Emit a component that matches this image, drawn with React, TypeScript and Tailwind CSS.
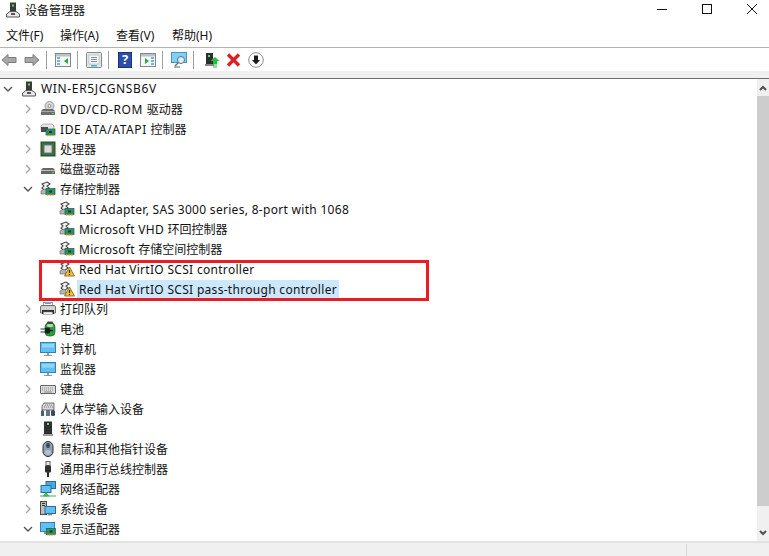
import { ReactNode } from 'react';

const Svg = ({ children, size = 16, className = '' }: { children: ReactNode; size?: number; className?: string }) => (
  <svg width={size} height={size} viewBox="0 0 16 16" className={`shrink-0 ${className}`}>
    {children}
  </svg>
);

// Tree icons
const ComputerRoot = () => (
  <Svg>
    <rect x="5" y="0.5" width="6" height="9" fill="#3c3c3c" />
    <rect x="7" y="2.5" width="2" height="2" fill="#5fd35f" />
    <path d="M5 9.5 H11 L14.5 12 V15 H1.5 V12 Z" fill="#e8e8e8" stroke="#555" />
    <rect x="6" y="11" width="4" height="2" fill="#555" />
  </Svg>
);

const Disc = () => (
  <Svg>
    <ellipse cx="9.5" cy="5" rx="4.5" ry="4.5" fill="#d8d8d8" stroke="#9a9a9a" />
    <circle cx="9.5" cy="5" r="1.5" fill="#fff" stroke="#888" />
    <path d="M1 10 L3 8 H13 L15 10 V14 H1 Z" fill="#6d6d6d" />
    <rect x="1" y="10" width="14" height="1" fill="#a8a8a8" />
    <rect x="12" y="12" width="2" height="1" fill="#62d862" />
  </Svg>
);

const Board = ({ x = 6, y = 8 }: { x?: number; y?: number }) => (
  <g>
    <rect x={x} y={y} width="9" height="6" fill="#2f8f6a" stroke="#1d5e47" strokeWidth="0.7" />
    <rect x={x + 3} y={y + 2} width="3" height="2" fill="#163a2c" />
    <path d={`M${x + 1} ${y + 6.5} H${x + 8}`} stroke="#e8a020" strokeWidth="1.6" strokeDasharray="1 0.6" />
  </g>
);

const Ide = () => (
  <Svg>
    <path d="M1 5 L3 3 H12 L14 5 V9 H1 Z" fill="#e6e6e6" stroke="#8c8c8c" strokeWidth="0.6" />
    <rect x="1" y="6" width="7" height="5" fill="#4c4c4c" />
    <Board />
  </Svg>
);

const Cpu = () => (
  <Svg>
    <rect x="1" y="1" width="14" height="14" fill="#3a6b45" stroke="#274c31" />
    <rect x="4" y="4" width="8" height="8" fill="#ddd" stroke="#6a7d6e" />
    <path d="M1 3 H0 M1 6 H0 M1 9 H0 M1 12 H0 M15 3 H16 M15 6 H16 M15 9 H16 M15 12 H16" stroke="#c8a030" strokeWidth="1" />
  </Svg>
);

const Drive = () => (
  <Svg>
    <path d="M1 9 L3 7 H13 L15 9 V13 H1 Z" fill="#666" />
    <rect x="1" y="9" width="14" height="1" fill="#bdbdbd" />
    <rect x="12" y="11" width="2" height="1" fill="#62d862" />
  </Svg>
);

const GearBase = () => (
  <g>
    <path d="M7 1 L10 3 L7 5 L9 7 L5 10 L2 7 L4 5 L2 3 Z" fill="#f4f4f4" stroke="#4a4a4a" strokeWidth="1.1" />
    <path d="M1 10 L5 8 L7 10 V13 H1 Z" fill="#b5b5b5" stroke="#666" strokeWidth="0.6" />
  </g>
);

const Storage = () => (
  <Svg>
    <GearBase />
    <Board y={7.5} />
  </Svg>
);

const StorageWarn = () => (
  <Svg>
    <GearBase />
    <path d="M10.5 6 L15.5 15 H5.5 Z" fill="#f5c33b" stroke="#7a5a10" strokeWidth="0.8" strokeLinejoin="round" />
    <path d="M10.5 9 V12 M10.5 13 V14" stroke="#222" strokeWidth="1.2" />
  </Svg>
);

const Printer = () => (
  <Svg>
    <rect x="3.5" y="1.5" width="9" height="3" fill="#fff" stroke="#777" strokeWidth="0.7" />
    <rect x="5" y="2" width="6" height="1" fill="#3cb0e0" />
    <path d="M0.5 6 Q0.5 4.5 2 4.5 H14 Q15.5 4.5 15.5 6 V12 H0.5 Z" fill="#d2d2d2" stroke="#555" strokeWidth="0.8" />
    <rect x="2" y="9" width="12" height="4" fill="#2f2f2f" />
    <rect x="3.5" y="11" width="9" height="2.5" fill="#f5f5f5" stroke="#777" strokeWidth="0.5" />
  </Svg>
);

const Battery = () => (
  <Svg>
    <rect x="5" y="2" width="10" height="13" rx="4" fill="#27a040" stroke="#14602a" strokeWidth="0.7" />
    <rect x="7" y="0.5" width="6" height="3" rx="1" fill="#444" />
    <rect x="7" y="3" width="6" height="3" rx="1" fill="#a8dca8" />
    <path d="M0.5 8 H6 M0.5 11 H6" stroke="#333" strokeWidth="1.2" />
    <rect x="5" y="6.5" width="5" height="6" rx="1.5" fill="#1d1d1d" />
    <path d="M10 9.5 H13" stroke="#1d1d1d" strokeWidth="1.5" />
  </Svg>
);

const Monitor = () => (
  <Svg>
    <rect x="0.5" y="1.5" width="15" height="10" fill="#5fc0f3" stroke="#3d7fa8" />
    <rect x="2" y="3" width="12" height="3.5" fill="#8ed7fb" />
    <rect x="7" y="12" width="2" height="2" fill="#8a9aa5" />
    <rect x="4" y="14" width="8" height="1" fill="#8a9aa5" />
  </Svg>
);

const Keyboard = () => (
  <Svg>
    <rect x="0.5" y="4.5" width="15" height="8" rx="0.5" fill="#dcdcdc" stroke="#666" />
    <path d="M2 7 H14 M2 9 H14" stroke="#8a8a8a" strokeWidth="1" strokeDasharray="1 1" />
    <path d="M4 11 H12" stroke="#8a8a8a" strokeWidth="1" />
  </Svg>
);

const Hid = () => (
  <Svg>
    <path d="M2 5 L4 2 H14 V9 H2 Z" fill="#d8d8d8" stroke="#555" strokeWidth="0.8" />
    <path d="M5 4 H13 M4 6 H13" stroke="#777" strokeWidth="1" strokeDasharray="1 1" />
    <path d="M1 15 V10 Q2 8 4 10 V15 Z" fill="#4b5c77" />
    <rect x="6" y="9" width="4" height="6" fill="#5d7390" />
    <rect x="11" y="9" width="4" height="6" rx="1.5" fill="#39475c" />
  </Svg>
);

const Software = () => (
  <Svg>
    <rect x="4" y="0.5" width="8" height="14" fill="#2f2f2f" />
    <rect x="7" y="2" width="2" height="2" fill="#55e06a" />
    <rect x="3" y="13" width="10" height="2" fill="#a0a0a0" />
  </Svg>
);

const Mouse = () => (
  <Svg>
    <rect x="3" y="0.5" width="10" height="15" rx="5" fill="#8fa0b0" stroke="#26313c" />
    <rect x="6" y="2" width="4" height="5" rx="2" fill="#3c4a58" />
    <rect x="5" y="9" width="6" height="5" rx="2.5" fill="#b4c0cb" />
  </Svg>
);

const Usb = () => (
  <Svg>
    <rect x="6" y="0.5" width="4" height="4" fill="#e8e8e8" stroke="#666" />
    <rect x="5" y="4.5" width="6" height="7" rx="1" fill="#2f2f2f" />
    <path d="M8 11 V16" stroke="#2f2f2f" strokeWidth="2" />
  </Svg>
);

const Network = () => (
  <Svg>
    <rect x="6" y="0.5" width="9.5" height="7" fill="#4aa8e0" stroke="#2d6c95" />
    <rect x="1" y="4.5" width="10" height="7" fill="#5fc0f3" stroke="#2d6c95" />
    <path d="M6 11.5 V13" stroke="#555" />
    <path d="M3 15 L6 12.5 L9 15 Z M0 15 H16" fill="#3fb54a" stroke="#3fb54a" strokeWidth="1" />
  </Svg>
);

const SystemDev = () => (
  <Svg>
    <rect x="0.5" y="0.5" width="6" height="13" fill="#bdbdbd" stroke="#4a4a4a" />
    <rect x="2" y="2" width="3" height="1" fill="#333" />
    <rect x="2" y="4" width="3" height="1" fill="#333" />
    <rect x="5" y="5.5" width="10.5" height="7" fill="#5fc0f3" stroke="#2d6c95" />
    <rect x="8" y="13" width="4" height="1.5" fill="#8a9aa5" />
  </Svg>
);

const Display = () => (
  <Svg>
    <rect x="0.5" y="1.5" width="14" height="9" fill="#5fc0f3" stroke="#3d7fa8" />
    <rect x="4" y="11" width="6" height="2" fill="#8a9aa5" />
    <Board x={6.5} y={7.5} />
  </Svg>
);

const icons = {
  disc: <Disc />,
  ide: <Ide />,
  cpu: <Cpu />,
  drive: <Drive />,
  storage: <Storage />,
  warn: <StorageWarn />,
  printer: <Printer />,
  battery: <Battery />,
  computer: <Monitor />,
  monitor: <Monitor />,
  keyboard: <Keyboard />,
  hid: <Hid />,
  software: <Software />,
  mouse: <Mouse />,
  usb: <Usb />,
  network: <Network />,
  system: <SystemDev />,
  display: <Display />,
};

type Row = { label: string; icon: keyof typeof icons; level: 1 | 2; open?: boolean; selected?: boolean; caps?: boolean };

const rows: Row[] = [
  { label: 'DVD/CD-ROM 驱动器', icon: 'disc', level: 1, caps: true },
  { label: 'IDE ATA/ATAPI 控制器', icon: 'ide', level: 1, caps: true },
  { label: '处理器', icon: 'cpu', level: 1 },
  { label: '磁盘驱动器', icon: 'drive', level: 1 },
  { label: '存储控制器', icon: 'storage', level: 1, open: true },
  { label: 'LSI Adapter, SAS 3000 series, 8-port with 1068', icon: 'storage', level: 2 },
  { label: 'Microsoft VHD 环回控制器', icon: 'storage', level: 2 },
  { label: 'Microsoft 存储空间控制器', icon: 'storage', level: 2 },
  { label: 'Red Hat VirtIO SCSI controller', icon: 'warn', level: 2 },
  { label: 'Red Hat VirtIO SCSI pass-through controller', icon: 'warn', level: 2, selected: true },
  { label: '打印队列', icon: 'printer', level: 1 },
  { label: '电池', icon: 'battery', level: 1 },
  { label: '计算机', icon: 'computer', level: 1 },
  { label: '监视器', icon: 'monitor', level: 1 },
  { label: '键盘', icon: 'keyboard', level: 1 },
  { label: '人体学输入设备', icon: 'hid', level: 1 },
  { label: '软件设备', icon: 'software', level: 1 },
  { label: '鼠标和其他指针设备', icon: 'mouse', level: 1 },
  { label: '通用串行总线控制器', icon: 'usb', level: 1 },
  { label: '网络适配器', icon: 'network', level: 1 },
  { label: '系统设备', icon: 'system', level: 1 },
  { label: '显示适配器', icon: 'display', level: 1, open: true },
];

const Chevron = ({ open }: { open?: boolean }) => (
  <svg width="10" height="10" viewBox="0 0 10 10" className="shrink-0">
    {open ? (
      <path d="M1 3 L5 7 L9 3" fill="none" stroke="#555" strokeWidth="1.4" />
    ) : (
      <path d="M3 1 L7 5 L3 9" fill="none" stroke="#a6a6a6" strokeWidth="1.4" />
    )}
  </svg>
);

// latin runs get a little tracking, CJK runs none
const Label = ({ text, caps }: { text: string; caps?: boolean }) => (
  <>
    {text.split(/([\u4e00-\u9fff]+)/).map((part, i) =>
      i % 2 === 1 ? (
        <span key={i}>{part}</span>
      ) : (
        <span key={i} className={caps ? 'tracking-[0.6px]' : 'tracking-[0.3px]'}>
          {part}
        </span>
      ),
    )}
  </>
);

const Sep = () => <div className="w-px h-[18px] bg-[#a0a0a0] shrink-0" />;

// Toolbar icons
const ArrowBtn = ({ flip }: { flip?: boolean }) => (
  <svg width="16" height="14" viewBox="0 0 16 14" className={flip ? 'shrink-0 -scale-x-100' : 'shrink-0'}>
    <path d="M1 7 L7 1.5 V4.5 H15 V9.5 H7 V12.5 Z" fill="#a8a8a8" stroke="#7c7c7c" />
  </svg>
);

const PanelIcon = ({ right }: { right?: boolean }) => (
  <Svg>
    <rect x="0.5" y="1.5" width="15" height="13" fill="#f4f8f8" stroke="#7f8a8a" />
    <rect x="1" y="2" width="14" height="2.5" fill="#b9c3c3" />
    {right ? (
      <>
        <path d="M5 6 L9 9 L5 12 Z" fill="#27ad3c" />
        <path d="M11 6 H14 M11 9 H14 M11 12 H14" stroke="#4d9ad0" strokeWidth="1.5" />
      </>
    ) : (
      <>
        <path d="M2 6 H5 M2 9 H5 M2 12 H5" stroke="#4d9ad0" strokeWidth="1.5" />
        <path d="M13 6 L9 9 L13 12 Z" fill="#27ad3c" />
      </>
    )}
  </Svg>
);

const App = () => (
  <div className="relative w-[769px] h-[556px] overflow-hidden bg-white flex flex-col text-[12px] text-[#111] font-['Noto_Sans','Noto_Sans_CJK_SC',sans-serif]">
    {/* Title bar */}
    <div className="h-[25px] flex shrink-0">
      <div className="pl-[5px] pt-[2px] flex items-start">
        <ComputerRoot />
        <span className="ml-[4px]">设备管理器</span>
      </div>
      <div className="ml-auto flex pt-[4px] pr-[12px] gap-[35px]">
        <svg width="10" height="10" viewBox="0 0 10 10"><path d="M0 5.5 H10" stroke="#111" /></svg>
        <svg width="10" height="10" viewBox="0 0 10 10"><rect x="0.5" y="0.5" width="9" height="9" fill="none" stroke="#111" /></svg>
        <svg width="10" height="10" viewBox="0 0 10 10"><path d="M0 0 L10 10 M10 0 L0 10" stroke="#111" /></svg>
      </div>
    </div>

    {/* Menu */}
    <div className="h-[23px] flex items-center pl-[6px] shrink-0 border-b border-[#b4b4b4]">
      <span className="w-[54px]">文件(F)</span>
      <span className="w-[56px]">操作(A)</span>
      <span className="w-[56px]">查看(V)</span>
      <span>帮助(H)</span>
    </div>

    {/* Toolbar */}
    <div className="h-[23px] flex items-center pl-px shrink-0">
      <ArrowBtn />
      <div className="w-[7px]" />
      <ArrowBtn flip />
      <div className="w-[6px]" />
      <Sep />
      <div className="w-[8px]" />
      <PanelIcon />
      <div className="w-[6px]" />
      <Sep />
      <div className="w-[8px]" />
      <Svg>
        <rect x="0.5" y="0.5" width="15" height="15" rx="1" fill="#e4e8e8" stroke="#7f8a8a" />
        <rect x="3" y="3" width="10" height="9" fill="#fafafa" stroke="#a9b4b4" strokeWidth="0.7" />
        <path d="M5 5.5 H11 M5 7.5 H11 M5 9.5 H11" stroke="#7a8a9a" />
        <rect x="5" y="13" width="6" height="1.5" fill="#3cb0e0" />
      </Svg>
      <div className="w-[6px]" />
      <Sep />
      <div className="w-[9px]" />
      <div className="w-[14px] h-[16px] bg-[#2b4fa8] border border-[#1c3578] flex items-center justify-center shrink-0 text-white font-bold text-[13px] leading-none">?</div>
      <div className="w-[8px]" />
      <PanelIcon right />
      <div className="w-[6px]" />
      <Sep />
      <div className="w-[8px]" />
      <Svg>
        <rect x="0.5" y="0.5" width="15" height="10" fill="#7fd0f7" stroke="#4b93bd" />
        <path d="M3 15 H9" stroke="#8a9aa5" strokeWidth="1.5" />
        <circle cx="10" cy="8" r="3.5" fill="#d7eefa" stroke="#64727c" />
        <path d="M7.5 10.5 L4 14" stroke="#64727c" strokeWidth="1.5" />
      </Svg>
      <div className="w-[6px]" />
      <Sep />
      <div className="w-[10px]" />
      <Svg>
        <rect x="2" y="1" width="7" height="12" fill="#2f2f2f" />
        <rect x="4" y="3" width="2" height="2" fill="#55e06a" />
        <rect x="1" y="12" width="9" height="2" fill="#888" />
        <path d="M11 5 L15.5 9 H13 V12 H9 V9 H6.5 Z" fill="#21c33d" />
        <path d="M9 13 H13 M9 15 H13" stroke="#21c33d" strokeWidth="1.2" />
      </Svg>
      <div className="w-[6px]" />
      <svg width="15" height="14" viewBox="0 0 15 14" className="shrink-0">
        <path d="M2 1.5 L13 12.5 M13 1.5 L2 12.5" stroke="#df1f26" strokeWidth="3.4" />
      </svg>
      <div className="w-[7px]" />
      <Svg>
        <circle cx="8" cy="8" r="7.3" fill="#fff" stroke="#8c8c8c" />
        <path d="M6 3.5 H10 V8 H12 L8 12.5 L4 8 H6 Z" fill="#1a1a1a" />
      </Svg>
    </div>

    {/* Strip above the tree */}
    <div className="h-[8px] shrink-0 bg-[#f0f0f0] border-b border-[#6d6d6d]" />

    {/* Tree + scrollbar */}
    <div className="flex-1 flex min-h-0">
      <div className="flex-1 min-w-0 overflow-hidden">
        <div className="h-5 flex items-center pl-[3px]">
          <Chevron open />
          <div className="ml-[8px]"><ComputerRoot /></div>
          <span className="ml-[4px] tracking-[0.65px]">WIN-ER5JCGNSB6V</span>
        </div>
        {rows.map(row => (
          <div key={row.label} className={`h-5 flex items-center ${row.level === 1 ? 'pl-[23px]' : 'pl-[59px]'}`}>
            {row.level === 1 && <Chevron open={row.open} />}
            <div className={row.level === 1 ? 'ml-[7px]' : ''}>{icons[row.icon]}</div>
            <span
              className={`ml-[2px] pl-[2px] pr-[2px] h-[19px] leading-[19px] whitespace-nowrap ${
                row.selected ? 'bg-[#cce8ff]' : ''
              }`}
            >
              <Label text={row.label} caps={row.caps} />
            </span>
          </div>
        ))}
      </div>
      <div className="w-[12px] shrink-0 bg-[#f0f0f0] flex flex-col">
        <div className="h-[17px] flex items-center justify-center">
          <svg width="8" height="6" viewBox="0 0 8 6"><path d="M1 5 L4 2 L7 5" fill="none" stroke="#505050" strokeWidth="2" /></svg>
        </div>
        <div className="flex-1 mb-[18px] bg-[#cdcdcd]" />
        <div className="h-[17px] flex items-center justify-center">
          <svg width="8" height="6" viewBox="0 0 8 6"><path d="M1 1 L4 4 L7 1" fill="none" stroke="#505050" strokeWidth="2" /></svg>
        </div>
      </div>
    </div>

    {/* Status bar */}
    <div className="h-[15px] shrink-0 bg-[#f0f0f0] border-t-2 border-[#e2e2e2] flex">
      <div className="w-[687px] border-r border-[#d9d9d9] mt-[1px]" />
    </div>

    {/* Red annotation rectangle */}
    <div className="absolute left-[39px] top-[260px] w-[390px] h-[41px] border-[3px] border-[#ed1c24] pointer-events-none" />
  </div>
);

export default App;
